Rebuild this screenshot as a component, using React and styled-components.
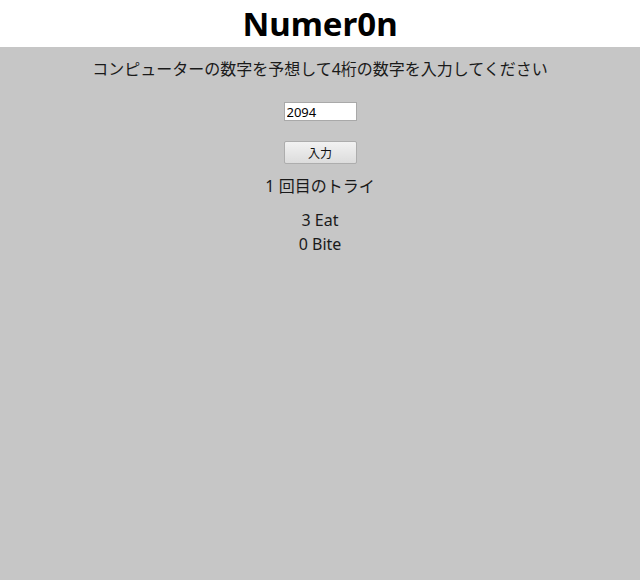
import styled, { createGlobalStyle } from "styled-components";
import { useState } from "react";

const GlobalStyle = createGlobalStyle`
    html, body {
        margin: 0;
        padding: 0;
        background: #c6c6c6;
        font-family: "Noto Sans", "Noto Sans CJK JP", sans-serif;
        color: #1a1a1a;
    }
`;

const Header = styled.header`
    background: #ffffff;
    height: 47px;
    display: flex;
    justify-content: center;
    align-items: center;
`;

const Title = styled.h1`
    margin: 0;
    font-size: 33px;
    font-weight: 700;
    color: #000;
    line-height: 1;
`;

const Main = styled.main`
    display: flex;
    flex-direction: column;
    align-items: center;
    padding-top: 11px;
`;

const Prompt = styled.p`
    margin: 0;
    font-size: 16px;
    line-height: 22px;
`;

const NumberInput = styled.input`
    margin-top: 22px;
    width: 73px;
    height: 19px;
    box-sizing: border-box;
    border: 1px solid #a9a9a9;
    background: #fff;
    font-family: "Noto Sans", "Liberation Sans", sans-serif;
    font-size: 13px;
    padding: 0 2px;
    color: #000;
`;

const SubmitButton = styled.button`
    margin-top: 20px;
    width: 73px;
    height: 23px;
    box-sizing: border-box;
    border: 1px solid #adadad;
    border-radius: 2px;
    background: linear-gradient(#f2f2f2, #dcdcdc);
    font-family: "Noto Sans CJK JP", sans-serif;
    font-size: 12px;
    color: #111;
    padding: 0;
`;

const Line = styled.div`
    font-size: 16px;
    line-height: 24px;
    margin-top: ${props => props.$gap || 0}px;
`;

function App() {
    const [guess, setGuess] = useState("2094")
    const results = { try: 1, eat: 3, bite: 0 }

    return (
        <>
            <GlobalStyle />
            <Header>
                <Title>Numer0n</Title>
            </Header>
            <Main>
                <Prompt>コンピューターの数字を予想して4桁の数字を入力してください</Prompt>
                <NumberInput value={guess} onChange={e => setGuess(e.target.value)} />
                <SubmitButton>入力</SubmitButton>
                <Line $gap={10}>{results.try} 回目のトライ</Line>
                <Line $gap={10}>{results.eat} Eat</Line>
                <Line>{results.bite} Bite</Line>
            </Main>
        </>
    )
}

export default App
